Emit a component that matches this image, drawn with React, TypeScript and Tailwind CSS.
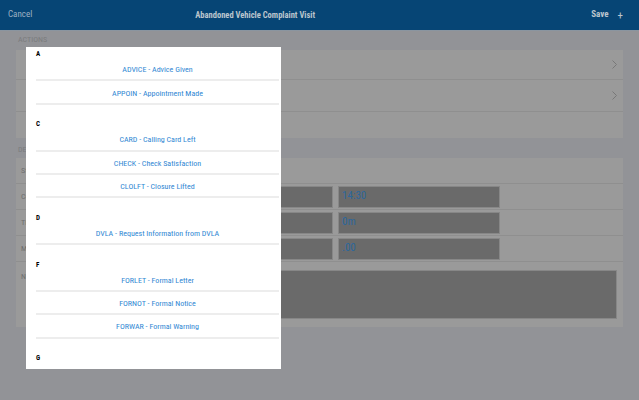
const font = "font-['Liberation_Sans_Narrow','Roboto_Condensed',Roboto,sans-serif]"

const sections: { letter: string; items: string[] }[] = [
  { letter: "A", items: ["ADVICE - Advice Given", "APPOIN - Appointment Made"] },
  { letter: "C", items: ["CARD - Calling Card Left", "CHECK - Check Satisfaction", "CLOLFT - Closure Lifted"] },
  { letter: "D", items: ["DVLA - Request Information from DVLA"] },
  { letter: "F", items: ["FORLET - Formal Letter", "FORNOT - Formal Notice", "FORWAR - Formal Warning"] },
  { letter: "G", items: [] },
]

function Chevron() {
  return (
    <svg className="w-[5px] h-[9px] text-[#787878]" viewBox="0 0 5 9" fill="none" stroke="currentColor" strokeWidth={1}>
      <polyline points="0.5,0.5 4.5,4.5 0.5,8.5" />
    </svg>
  )
}

function InputRow({ label, right }: { label: string; right: string }) {
  return (
    <div className="h-[26px] border-b border-[#8f8f8f] flex items-center">
      <span className="w-[155px] pl-[5px] text-[8px] text-[#6f6f6f]">{label}</span>
      <div className="flex gap-[5px] h-[22px]">
        <div className="w-[162px] bg-[#6a6a6a] border border-[#878787]" />
        <div className="w-[162px] bg-[#6a6a6a] border border-[#878787] flex items-center px-[3px] text-[11px] text-[#2c679c]">
          {right}
        </div>
      </div>
    </div>
  )
}

export default function App() {
  return (
    <div className={`relative w-[639px] h-[400px] overflow-hidden bg-[#929397] ${font}`}>
      {/* Header */}
      <header className="h-[31px] bg-[#064575] border-b border-[#8a95a0] flex items-center pl-[8px] pr-[16px]">
        <span className="text-[9px] text-[#9fb2c4]">Cancel</span>
        <span className="ml-[163px] text-[8.5px] font-bold text-[#bcc5ce]">Abandoned Vehicle Complaint Visit</span>
        <div className="flex-1" />
        <span className="text-[9px] font-bold text-[#bcc5ce]">Save</span>
        <span className="ml-[9px] text-[11px] leading-none text-[#bcc5ce]">+</span>
      </header>

      <main className="px-[16px]">
        <div className="h-[19px] pt-[3px] pl-[2px] text-[8px] text-[#7b7c7e]">ACTIONS</div>
        <div className="bg-[#9a9a9a]">
          <div className="h-[30px] border-b border-[#8f8f8f] flex items-center justify-end pr-[6px]">
            <Chevron />
          </div>
          <div className="h-[32px] border-b border-[#8f8f8f] flex items-center justify-end pr-[6px]">
            <Chevron />
          </div>
          <div className="h-[26px]" />
        </div>

        <div className="h-[20px] pt-[6px] pl-[2px] text-[8px] text-[#7b7c7e]">DETAILS</div>
        <div className="bg-[#9a9a9a] pb-[8px]">
          <div className="h-[26px] border-b border-[#8f8f8f] flex items-center pl-[5px] text-[8px] text-[#6f6f6f]">
            Status
          </div>
          <InputRow label="Completed" right="14:30" />
          <InputRow label="Time Taken" right="0m" />
          <InputRow label="Mileage" right=".00" />
          <div className="flex pt-[8px] pr-[6px]">
            <span className="w-[155px] pl-[5px] pt-[1px] text-[8px] text-[#6f6f6f]">Notes</span>
            <div className="flex-1 h-[49px] bg-[#6a6a6a] border border-[#878787]" />
          </div>
        </div>
      </main>

      {/* Picker popup */}
      <div className="absolute left-[26px] top-[47px] w-[255px] h-[322px] bg-white overflow-hidden">
        <div className="-mt-[12.4px] pl-[10px] pr-[2px]">
          {sections.map((s) => (
            <div key={s.letter}>
              <div className="h-[23.4px] flex items-end text-[7px] leading-[8px] font-bold text-black">
                {s.letter}
              </div>
              {s.items.map((item) => (
                <div
                  key={item}
                  className="h-[23.4px] pt-[3px] border-b-2 border-[#ededed] flex items-center justify-center text-[8px] text-[#2f87d3]"
                >
                  {item}
                </div>
              ))}
            </div>
          ))}
        </div>
      </div>
    </div>
  )
}
